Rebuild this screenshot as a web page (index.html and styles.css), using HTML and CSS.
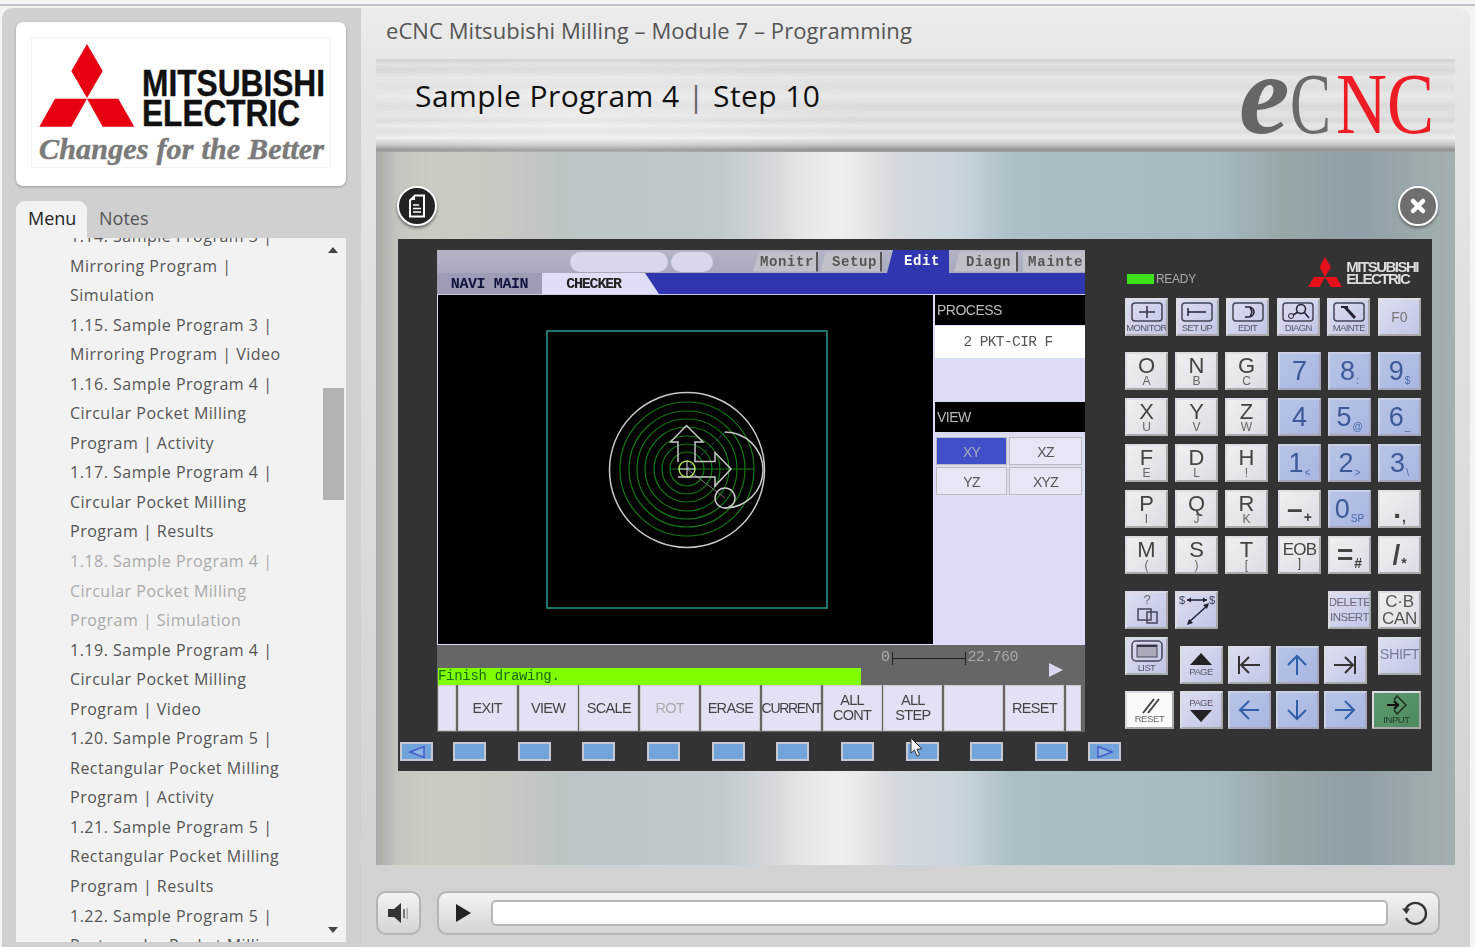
FILE: index.html
```html
<!DOCTYPE html>
<html>
<head>
<meta charset="utf-8">
<title>eCNC Mitsubishi Milling</title>
<link rel="stylesheet" href="styles.css">
</head>
<body>
<div class="topline"></div>
<div class="app">

<div class="sidebar">
	<div class="logocard">
		<svg class="melco" viewBox="31 37 300 131" width="300" height="131">
			<rect x="31.5" y="37.5" width="299" height="130" fill="#fff" stroke="#e6e6e6" stroke-dasharray="1 1"/>
			<path fill="#e60012" d="M87 44l15.700 27L87 98 71.300 71zM55 98.700h32l-15.700 28h-32zM87 98.700h31.300l16 28h-31.600z"/>
			<text x="142" y="96" class="melco-name" textLength="183" lengthAdjust="spacingAndGlyphs">MITSUBISHI</text>
			<text x="142" y="126" class="melco-name" textLength="158" lengthAdjust="spacingAndGlyphs">ELECTRIC</text>
			<text x="39" y="159" class="melco-tag" textLength="285" lengthAdjust="spacing">Changes for the Better</text>
		</svg>
	</div>
	<div class="tabs">
		<div class="tab active">Menu</div>
		<div class="tab">Notes</div>
	</div>
	<div class="menu">
		<ul class="menulist">
			<li>1.14. Sample Program 3 |<br>Mirroring Program |<br>Simulation</li>
			<li>1.15. Sample Program 3 |<br>Mirroring Program | Video</li>
			<li>1.16. Sample Program 4 |<br>Circular Pocket Milling<br>Program | Activity</li>
			<li>1.17. Sample Program 4 |<br>Circular Pocket Milling<br>Program | Results</li>
			<li class="current">1.18. Sample Program 4 |<br>Circular Pocket Milling<br>Program | Simulation</li>
			<li>1.19. Sample Program 4 |<br>Circular Pocket Milling<br>Program | Video</li>
			<li>1.20. Sample Program 5 |<br>Rectangular Pocket Milling<br>Program | Activity</li>
			<li>1.21. Sample Program 5 |<br>Rectangular Pocket Milling<br>Program | Results</li>
			<li>1.22. Sample Program 5 |<br>Rectangular Pocket Milling<br>Program | Simulation</li>
		</ul>
		<div class="arrow-up"></div>
		<div class="thumb"></div>
		<div class="arrow-down"></div>
	</div>
</div>

<div class="main">
	<div class="title">eCNC Mitsubishi Milling – Module 7 – Programming</div>
	<div class="header">
		<div class="slide-title">Sample Program 4 <span class="sep">|</span> Step 10</div>
		<svg class="ecnc" viewBox="0 0 200 66" width="200" height="66">
			<text x="4" y="59" class="ecnc-e">e</text>
			<text x="55" y="59" class="ecnc-c" textLength="41" lengthAdjust="spacingAndGlyphs">C</text>
			<text x="101" y="59" class="ecnc-r" textLength="98" lengthAdjust="spacingAndGlyphs">NC</text>
		</svg>
	</div>

	<div class="stage">
		<div class="roundbtn dark">
			<svg width="18" height="24" viewBox="0 0 18 24"><path fill="none" stroke="#fff" stroke-width="2" d="M7 1.500h9v21H2V6.500z"/><path fill="#fff" d="M2 6l5-5v5z"/><path stroke="#fff" stroke-width="1.500" d="M5 11h6M5 14.500h8M5 18h8"/></svg>
		</div>
		<div class="roundbtn gray">
			<svg width="22" height="22" viewBox="0 0 22 22"><path stroke="#fff" stroke-width="4.500" stroke-linecap="round" d="M6 6l10 10M16 6L6 16"/></svg>
		</div>

		<div class="panel">
			<div class="leftcol">
				<div class="screen">
					<div class="tabbar">
						<div class="pill wide"></div>
						<div class="pill"></div>
						<div class="gtab t1">Monitr</div>
						<div class="gtab t2">Setup</div>
						<div class="gtab t3">Edit</div>
						<div class="gtab t4">Diagn</div>
						<div class="gtab t5">Mainte</div>
					</div>
					<div class="navibar">
						<div class="navi">NAVI MAIN</div>
						<div class="navi on">CHECKER</div>
					</div>
					<div class="work">
						<svg class="canvas" viewBox="438 295 495 349" width="495" height="349">
							<rect x="547" y="331" width="280" height="277" fill="none" stroke="#2a9a8e" stroke-width="1.500"/>
							<g fill="none" stroke="#127a12" stroke-width="1.200">
								<circle cx="687" cy="469" r="67"/>
								<circle cx="687" cy="469" r="58"/>
								<circle cx="687" cy="469" r="50"/>
								<circle cx="687" cy="469" r="42"/>
								<circle cx="687" cy="469" r="33"/>
								<circle cx="687" cy="469" r="25"/>
								<circle cx="687" cy="469" r="17"/>
								<path d="M670 469h84"/>
							</g>
							<path stroke="#2a6f7a" stroke-dasharray="3 2" d="M687 469l38-37"/>
							<path stroke="#777" d="M687 469l38 29"/>
							<g fill="none" stroke="#c8c8c8" stroke-width="1.500">
								<circle cx="687" cy="470" r="77.500"/>
								<path d="M678 462v-20h-7.500l16-16.500 16.500 16.500h-8v19.500h20v-9l16 16.500-16 17v-9h-37"/>
								<path d="M725 432a38 38 0 0 1 0 76"/>
								<circle cx="725" cy="498" r="10"/>
							</g>
							<circle cx="687" cy="469" r="8" fill="none" stroke="#a8e050" stroke-width="1.500"/>
							<path stroke="#ddd" d="M687 461v16M679 469h16"/>
						</svg>
						<div class="side">
							<div class="sidehead">PROCESS</div>
							<div class="sidevalue">2 PKT-CIR F</div>
							<div class="sidefill"></div>
							<div class="sidehead">VIEW</div>
							<div class="viewgrid">
								<div class="viewbtn on">XY</div>
								<div class="viewbtn">XZ</div>
								<div class="viewbtn">YZ</div>
								<div class="viewbtn">XYZ</div>
							</div>
						</div>
					</div>
					<div class="status">
						<div class="message">Finish drawing.</div>
						<div class="scale">0<span class="scalebar"></span>22.760</div>
						<div class="next"></div>
					</div>
					<div class="softkeys">
						<div class="skey narrow"></div>
						<div class="skey">EXIT</div>
						<div class="skey">VIEW</div>
						<div class="skey">SCALE</div>
						<div class="skey off">ROT</div>
						<div class="skey">ERASE</div>
						<div class="skey tight">CURRENT</div>
						<div class="skey">ALL<br>CONT</div>
						<div class="skey">ALL<br>STEP</div>
						<div class="skey"></div>
						<div class="skey">RESET</div>
						<div class="skey narrow"></div>
					</div>
				</div>
				<div class="navrow">
					<div class="navkey"><svg width="18" height="14" viewBox="0 0 18 14"><path fill="#8cb4e2" stroke="#4358c8" stroke-width="1.500" d="M2 7l14-5.500v11z"/></svg></div>
					<div class="navgroup">
						<div class="navkey"></div>
						<div class="navkey"></div>
						<div class="navkey"></div>
						<div class="navkey"></div>
						<div class="navkey"></div>
						<div class="navkey"></div>
						<div class="navkey"></div>
						<div class="navkey"></div>
						<div class="navkey"></div>
						<div class="navkey"></div>
					</div>
					<div class="navkey"><svg width="18" height="14" viewBox="0 0 18 14"><path fill="#8cb4e2" stroke="#4358c8" stroke-width="1.500" d="M16 7L2 1.500v11z"/></svg></div>
				</div>
				<svg class="pointer" width="13" height="20" viewBox="0 0 13 20"><path fill="#fff" stroke="#333" d="M1 1v15l3.500-3 2.500 6 2.500-1-2.500-6h5z"/></svg>
			</div>

			<div class="keypad">
				<div class="readyrow">
					<div class="ready"><span class="lamp"></span>READY</div>
					<div class="minilogo">
						<svg width="34" height="32" viewBox="0 0 34 32"><path fill="#e8101a" d="M17 0l6 10-6 10-5.400-10zM6 20h11l-5.400 10H0zM17 20h11.500L34 30H23z"/></svg>
						<div class="ministack">MITSUBISHI<br>ELECTRIC</div>
					</div>
				</div>

				<div class="fnrow">
					<div class="key fn"><svg width="34" height="22" viewBox="0 0 34 22"><rect x="2" y="2" width="30" height="18" rx="3" fill="none" stroke="#445" stroke-width="1.500"/><path stroke="#334" stroke-width="1.500" d="M9 11h16M17 5v12"/></svg><small>MONITOR</small></div>
					<div class="key fn"><svg width="34" height="22" viewBox="0 0 34 22"><rect x="2" y="2" width="30" height="18" rx="3" fill="none" stroke="#445" stroke-width="1.500"/><path stroke="#223" stroke-width="1.500" d="M8 11h18M8 7v8"/></svg><small>SET UP</small></div>
					<div class="key fn"><svg width="34" height="22" viewBox="0 0 34 22"><rect x="2" y="2" width="30" height="18" rx="3" fill="none" stroke="#445" stroke-width="1.500"/><path fill="none" stroke="#223" stroke-width="1.500" d="M14 6h5l2 5-2 5h-5M18 6a5 5 0 0 1 0 10"/></svg><small>EDIT</small></div>
					<div class="key fn"><svg width="34" height="22" viewBox="0 0 34 22"><rect x="2" y="2" width="30" height="18" rx="3" fill="none" stroke="#445" stroke-width="1.500"/><circle cx="20" cy="8" r="4.500" fill="none" stroke="#223" stroke-width="1.500"/><circle cx="10" cy="15" r="2.500" fill="none" stroke="#223"/><path stroke="#223" stroke-width="1.500" d="M23 11l5 6M12 14l5-3"/></svg><small>DIAGN</small></div>
					<div class="key fn"><svg width="34" height="22" viewBox="0 0 34 22"><rect x="2" y="2" width="30" height="18" rx="3" fill="none" stroke="#445" stroke-width="1.500"/><path stroke="#223" stroke-width="3" d="M13 6l10 11"/><path fill="none" stroke="#223" stroke-width="2" d="M9 6h6v4"/></svg><small>MAINTE</small></div>
					<div class="key fn"><span class="f0">F0</span></div>
				</div>

				<div class="keyblock">
					<div class="keygrid">
						<div class="key lite"><b>O</b><small>A</small></div>
						<div class="key lite"><b>N</b><small>B</small></div>
						<div class="key lite"><b>G</b><small>C</small></div>
						<div class="key lite"><b>X</b><small>U</small></div>
						<div class="key lite"><b>Y</b><small>V</small></div>
						<div class="key lite"><b>Z</b><small>W</small></div>
						<div class="key lite"><b>F</b><small>E</small></div>
						<div class="key lite"><b>D</b><small>L</small></div>
						<div class="key lite"><b>H</b><small>!</small></div>
						<div class="key lite"><b>P</b><small>I</small></div>
						<div class="key lite"><b>Q</b><small>J</small></div>
						<div class="key lite"><b>R</b><small>K</small></div>
						<div class="key lite"><b>M</b><small>(</small></div>
						<div class="key lite"><b>S</b><small>)</small></div>
						<div class="key lite"><b>T</b><small>[</small></div>
					</div>
					<div class="keygrid">
						<div class="key num"><b>7</b></div>
						<div class="key num"><b>8</b><small>:</small></div>
						<div class="key num"><b>9</b><small>$</small></div>
						<div class="key num"><b>4</b></div>
						<div class="key num"><b>5</b><small>@</small></div>
						<div class="key num"><b>6</b><small>_</small></div>
						<div class="key num"><b>1</b><small>&lt;</small></div>
						<div class="key num"><b>2</b><small>&gt;</small></div>
						<div class="key num"><b>3</b><small>\</small></div>
						<div class="key sym"><b>–</b><small>+</small></div>
						<div class="key num"><b>0</b><small>SP</small></div>
						<div class="key sym"><b>.</b><small>,</small></div>
						<div class="key sym eob"><b>EOB</b><small>]</small></div>
						<div class="key sym"><b>=</b><small>#</small></div>
						<div class="key sym"><b>/</b><small>*</small></div>
					</div>
				</div>

				<div class="rowa">
					<div class="key fn"><svg width="34" height="34" viewBox="0 0 34 34"><text x="17" y="11" class="keyq">?</text><rect x="8" y="16" width="13" height="11" fill="none" stroke="#445" stroke-width="1.500"/><rect x="17" y="19" width="10" height="11" fill="none" stroke="#445" stroke-width="1.500"/></svg></div>
					<div class="key fn"><svg width="38" height="34" viewBox="0 0 38 34"><text x="1" y="11" class="keyd">$</text><text x="31" y="11" class="keyd">$</text><path stroke="#223" stroke-width="1.500" d="M9 7h20M10 30l20-18"/><path fill="#223" d="M9 7l4-2.500v5zM29 7l-4-2.500v5zM9 32l2-6 4 4zM31 10l-6 2 4 4z"/></svg></div>
					<div class="spacer"></div>
					<div class="key fn word">DELETE<br>INSERT</div>
					<div class="key lite word big">C·B<br>CAN</div>
				</div>

				<div class="lower">
					<div class="lowcol">
						<div class="key fn"><svg width="34" height="24" viewBox="0 0 34 24"><rect x="2" y="2" width="30" height="20" rx="4" fill="none" stroke="#445" stroke-width="1.500"/><rect x="7" y="6" width="20" height="12" fill="#aab" stroke="#445"/><path stroke="#334" stroke-width="2" d="M7 7h20"/></svg><small>LIST</small></div>
						<div class="key reset"><svg width="24" height="18" viewBox="0 0 24 18"><path stroke="#444" stroke-width="2" d="M5 17L16 3M10 17L21 3"/></svg><small>RESET</small></div>
					</div>
					<div class="arrows">
						<div class="key fn"><span class="up-tri"></span><small>PAGE</small></div>
						<div class="key fn"><svg width="26" height="22" viewBox="0 0 26 22"><path fill="none" stroke="#333" stroke-width="2" d="M3 2v18M24 11H5M13 3l-8 8 8 8"/></svg></div>
						<div class="key num"><svg width="24" height="24" viewBox="0 0 24 24"><path fill="none" stroke="#2f5fa8" stroke-width="2" d="M12 22V3M3 12l9-9 9 9"/></svg></div>
						<div class="key fn"><svg width="26" height="22" viewBox="0 0 26 22"><path fill="none" stroke="#333" stroke-width="2" d="M23 2v18M2 11h19M13 3l8 8-8 8"/></svg></div>
						<div class="key fn"><small>PAGE</small><span class="down-tri"></span></div>
						<div class="key num"><svg width="24" height="24" viewBox="0 0 24 24"><path fill="none" stroke="#2f5fa8" stroke-width="2" d="M22 12H3M12 3l-9 9 9 9"/></svg></div>
						<div class="key num"><svg width="24" height="24" viewBox="0 0 24 24"><path fill="none" stroke="#2f5fa8" stroke-width="2" d="M12 2v19M3 12l9 9 9-9"/></svg></div>
						<div class="key num"><svg width="24" height="24" viewBox="0 0 24 24"><path fill="none" stroke="#2f5fa8" stroke-width="2" d="M2 12h19M12 3l9 9-9 9"/></svg></div>
					</div>
					<div class="lowcol right">
						<div class="key fn word shift">SHIFT</div>
						<div class="key input"><svg width="24" height="20" viewBox="0 0 24 20"><path fill="none" stroke="#1d2f22" stroke-width="1.500" d="M9 5l3-4 9 9-9 9-3-4"/><path fill="none" stroke="#111" stroke-width="2.200" d="M2 10h10M9 6l4 4-4 4"/></svg><small>INPUT</small></div>
					</div>
				</div>
			</div>
		</div>
	</div>

	<div class="controls">
		<div class="volume">
			<svg width="24" height="24" viewBox="0 0 24 24"><path fill="#333" d="M1 8h6l7-6v20l-7-6H1z"/><path fill="#777" d="M16 8h2v9h-2z"/><path fill="#aaa" d="M19.500 7h1.500v11h-1.500z"/></svg>
		</div>
		<div class="playbar">
			<div class="play"></div>
			<div class="progress"></div>
			<svg class="replay" width="28" height="28" viewBox="0 0 28 28"><path fill="none" stroke="#333" stroke-width="2.400" d="M5.500 11A10.500 10.500 0 1 1 6 19"/><path fill="#333" d="M2 9.500h8l-3.500 5.500z"/></svg>
		</div>
	</div>
</div>

</div>
</body>
</html>
```

FILE: styles.css
```css
html, body {margin:0; padding:0; height:947px; overflow:hidden; background:#f4f4f4; font-family:"Open Sans", sans-serif;}
.topline {height:4px; background:#f6f6f6; border-bottom:2px solid #c4c4c8;}
.app {display:flex; height:941px; padding:2px 5px 0 2px;}

/* left column */
.sidebar {width:359px; flex:none; background:#d0d0d0; border-radius:10px 0 0 0; padding:14px 15px 0 14px; box-sizing:border-box;}
.logocard {background:#fff; height:164px; padding:15px; box-sizing:border-box; border-radius:7px; box-shadow:0 1px 3px #999;}
.melco {display:block;}
.melco-name {font:bold 37px "Liberation Sans", sans-serif; fill:#111; stroke:#111; stroke-width:.4;}
.melco-tag {font:italic bold 30px "Liberation Serif", serif; fill:#7a7a7a; stroke:#7a7a7a; stroke-width:.5;}
.tabs {display:flex; margin-top:15px; height:37px;}
.tab {font-size:18px; color:#555; padding:4px 12px 0; line-height:26px;}
.tab.active {background:#f2f2f2; color:#222; border-radius:9px 9px 0 0; width:47px;}
.menu {position:relative; height:704px; background:#f2f2f2; overflow:hidden;}
.menulist {list-style:none; margin:-16px 0 0; padding:0 0 0 54px; font-size:16px; line-height:29.550px; color:#555; letter-spacing:.5px; white-space:nowrap;}
.menulist .current {color:#aaa;}
.arrow-up, .arrow-down {position:absolute; left:312px; width:0; height:0; border-left:5.500px solid transparent; border-right:5.500px solid transparent;}
.arrow-up {top:9px; border-bottom:6px solid #444;}
.arrow-down {top:689px; border-top:6px solid #444;}
.thumb {position:absolute; left:307px; top:150px; width:21px; height:112px; background:#b3b3b3;}

/* right column */
.main {width:1109px; flex:none; background:linear-gradient(#ececec, #e6e6e6 60px, #d2d2d2 880px); border-radius:0 10px 0 0; padding:0 15px; box-sizing:border-box;}
.title {height:51px; line-height:44px; padding-left:10px; font-size:22px; color:#555; letter-spacing:.07px; white-space:nowrap;}
.header {height:93px; display:flex; justify-content:space-between; background:radial-gradient(ellipse 300px 60px at 200px 55px, rgba(255,255,255,.4), transparent), linear-gradient(#d4d4d4, #e2e2e2 6%, #d8d8d8 12%, #e6e6e6 20%, #dedede 30%, #e8e8e8 40%, #dadada 50%, #e2e2e2 60%, #d8d8d8 66%, #e8e8e8 72%, #dcdcdc 78%, #eee 85%, #c0c0c0 93%, #8f8f8f 98%, #a4a4a4);}
.slide-title {font-size:30px; color:#111; letter-spacing:.43px; padding:16px 0 0 39px; white-space:nowrap;}
.sep {color:#666;}
.ecnc {margin:15px 20px 0 0; overflow:visible;}
.ecnc-e {font:italic bold 114px "Liberation Serif", serif; fill:#666;}
.ecnc-c {font:86px "Liberation Serif", serif; fill:#6a6a6a;}
.ecnc-r {font:86px "Liberation Serif", serif; fill:#ee1c25;}

.stage {position:relative; height:713px; box-sizing:border-box; padding:87px 0 0 22px; background:linear-gradient(90deg, #a8a8a6, #c6c6c0 2%, #cccac2 5%, #c8c8c2 12%, #bcc4c6 17%, #bcc6c8 22%, #c0cacc 32%, #d2d6da 36%, #e6e8e8 40%, #efefef 43%, #e8e8e8 45%, #d4d9de 48%, #c8d6dc 54%, #aebec7 59%, #a7b8c0 78%, #98a7a8 84%, #8f9fa5 91%, #a4b0b0);}
.roundbtn {position:absolute; top:34px; width:36px; height:36px; border-radius:50%; border:2px solid #fff; box-shadow:0 2px 3px #666; display:flex; align-items:center; justify-content:center;}
.roundbtn.dark {left:21px; background:#222;}
.roundbtn.gray {left:1022px; background:#6f6f6f;}

.panel {display:flex; width:1034px; height:532px; box-sizing:border-box; background:#333; padding:11px 11px 0 2px; gap:4px; filter:blur(.45px);}
.leftcol {width:721px; position:relative;}
.screen {margin-left:37px; width:648px; height:482px; display:flex; flex-direction:column; font-family:"Liberation Mono", monospace;}

.tabbar {height:23px; display:flex; align-items:center; background:linear-gradient(#b5b5c8, #a8a8be); flex:none;}
.pill {width:42px; height:20px; border-radius:10px; background:#d8d8ea; margin-left:3px;}
.pill.wide {width:98px; margin-left:133px;}
.gtab {height:20px; box-sizing:border-box; font-size:14px; line-height:20px; color:#555; background:#c0c0c8; letter-spacing:.6px; clip-path:polygon(6px 0, 100% 0, 100% 100%, 0 100%); font-weight:bold; white-space:nowrap; overflow:hidden; border-right:2px solid #555;}
.t1 {width:65px; margin-left:40px; padding-left:7px;}
.t2 {width:62px; margin-left:2px; padding-left:12px;}
.t3 {width:62px; margin-left:5px; padding-left:17px; height:23px; line-height:23px; background:#3035b0; color:#fff; border:0;}
.t4 {width:64px; margin-left:5px; padding-left:12px;}
.t5 {width:62px; margin-left:5px; padding-left:5px; clip-path:none; letter-spacing:.8px; border:0;}
.navibar {height:21px; display:flex; background:#3035b0; flex:none; font-size:15px; font-weight:bold;}
.navi {width:105px; background:#9c9cb4; color:#111340; text-align:center; line-height:23px; letter-spacing:-.4px;}
.navi.on {width:117px; background:#dedef6; color:#222; clip-path:polygon(0 0, 88% 0, 100% 100%, 0 100%); letter-spacing:-1.200px; padding-right:14px; box-sizing:border-box;}
.work {height:351px; display:flex; background:#dcdcf6; flex:none; border-top:1px solid #c8c8e8; box-sizing:border-box;}
.canvas {background:#000; margin-left:1px; flex:none; display:block;}
.side {margin-left:2px; width:150px; font-family:"Liberation Sans", sans-serif; color:#444;}
.sidehead {height:30px; background:#000; color:#bbb; font-size:14px; line-height:30px; padding-left:2px; letter-spacing:-.5px;}
.sidevalue {height:32px; background:#fff; text-align:center; font:14.500px/32px "Liberation Mono", monospace; color:#555; margin-top:1px; letter-spacing:-.6px; padding-right:4px;}
.sidefill {height:44px;}
.viewgrid {display:grid; grid-template-columns:71px 73px; gap:2px; margin:5px 0 0 1px;}
.viewbtn {height:28px; line-height:28px; text-align:center; font-size:14px; color:#555; background:#e6e6f6; border:1px solid #bbb; box-sizing:border-box; letter-spacing:-.8px;}
.viewbtn.on {background:#4050c8; color:#aab;}

.status {height:40px; background:#666; display:flex; align-items:flex-end; position:relative; flex:none;}
.message {width:423px; margin-left:1px; height:17px; background:#80ff00; color:#1a6a10; font-size:14px; line-height:17px; letter-spacing:-.3px;}
.scale {position:absolute; left:444px; top:4px; color:#aaa; font-size:15px; line-height:18px; display:flex; align-items:center; letter-spacing:-.6px;}
.scalebar {width:72px; height:13px; margin:0 1px 0 3px; border-left:1px solid #222; border-right:1px solid #222; background:linear-gradient(#222,#222) center/100% 1px no-repeat;}
.next {position:absolute; left:612px; top:18px; width:0; height:0; border-left:14px solid #d8d8f0; border-top:7px solid transparent; border-bottom:7px solid transparent;}
.softkeys {height:47px; background:#666; padding-left:1px; display:flex; gap:1.800px; flex:none;}
.skey {width:59px; height:46px; background:#e2e2f4; border:1px solid #ccc; box-sizing:border-box; font:14.500px/15px "Liberation Sans", sans-serif; color:#444; letter-spacing:-.7px; display:flex; align-items:center; justify-content:center; text-align:center;}
.skey.narrow {width:18px;}
.skey:last-child {width:15px;}
.skey.off {color:#aaa;}
.skey.tight {font-size:14px; letter-spacing:-1.300px;}

.navrow {display:flex; justify-content:space-between; margin-top:10px; width:721px;}
.navgroup {width:615px; display:flex; justify-content:space-between;}
.navkey {width:33px; height:19px; background:#70a4da; border:2px solid #c8c8d2; box-sizing:border-box; display:flex; align-items:center; justify-content:center; flex:none;}
.pointer {position:absolute; left:510px; top:487px;}

/* keypad */
.keypad {width:296px; flex:none; font-family:"Liberation Sans", sans-serif;}
.readyrow {height:48px; display:flex; justify-content:space-between; align-items:center; padding:0 3px 0 2px; box-sizing:border-box;}
.ready {display:flex; align-items:center; font-size:12px; color:#aaa; letter-spacing:-.3px; margin-top:9px;}
.lamp {width:27px; height:10px; background:#3ee01a; margin-right:2px;}
.minilogo {display:flex; align-items:center; gap:4px; margin-top:-3px;}
.ministack {font-size:15px; line-height:12px; font-weight:bold; color:#ddd; letter-spacing:-1.500px;}
.key {width:43px; height:38px; box-sizing:border-box; border:2px solid #dcdce2; border-right-color:#aaa; border-bottom-color:#aaa; display:flex; flex-direction:column; align-items:center; justify-content:center; color:#444; text-align:center; overflow:hidden;}
.key b {font-weight:normal; font-size:22px; line-height:20px;}
.key small {font-size:12px; line-height:11px; color:#666;}
.fn {background:linear-gradient(135deg, #dcdef0, #c2c6e6);}
.fn small {font-size:9.500px; letter-spacing:-.6px; line-height:10px; color:#556; white-space:nowrap;}
.f0 {font-size:14px; color:#777;}
.lite {background:linear-gradient(135deg, #f0f0f2, #dcdce4);}
.num {background:linear-gradient(135deg, #b8c4e6, #a8b6e2); flex-direction:row; color:#3c5a98; border-color:#c8cfe6 #a6a6b8 #a6a6b8 #c8cfe6;}
.num b {font-size:27px; line-height:26px;}
.num small {align-self:flex-end; font-size:10px; color:#4a68a8; margin-bottom:2px; margin-left:1px;}
.sym {background:linear-gradient(135deg, #f0f0f2, #dcdce6); flex-direction:row;}
.sym small {align-self:flex-end; margin-bottom:3px; margin-left:1px; font-size:14px; font-weight:bold; color:#444;}
.sym b {font-size:28px; font-weight:bold;}
.eob {flex-direction:column;}
.eob b {font-size:17px; font-weight:normal; letter-spacing:-.8px; line-height:16px;}
.eob small {align-self:center; margin:0; line-height:11px; font-weight:normal; font-size:12px;}
.fnrow {display:flex; justify-content:space-between;}
.keyblock {display:flex; justify-content:space-between; margin-top:16px;}
.keygrid {display:grid; grid-template-columns:repeat(3, 43px); column-gap:7px; row-gap:8px;}
.rowa {display:flex; gap:7px; margin-top:17px;}
.spacer {flex:1;}
.word {font-size:11.500px; line-height:15px; letter-spacing:-.5px; color:#667;}
.word.big {font-size:17px; line-height:17px; letter-spacing:-.3px; color:#555;}
.keyq {font:13px "Liberation Sans", sans-serif; fill:#667; text-anchor:middle;}
.keyd {font:11px "Liberation Sans", sans-serif; fill:#445;}
.lower {display:flex; justify-content:space-between; margin-top:8px;}
.lowcol {width:49px; display:flex; flex-direction:column; gap:16px;}
.lowcol.right {align-items:flex-end;}
.reset, .input {width:49px;}
.reset {background:#fafafa;}
.input {background:linear-gradient(135deg, #5e9a70, #4e8a60);}
.input small {font-size:9.500px; letter-spacing:-.4px; color:#1d3a26; line-height:10px;}
.reset small {font-size:9.500px; letter-spacing:-.4px; line-height:10px;}
.word.shift {font-size:14.500px; color:#7a7e9c; justify-content:flex-start; padding-top:8px;}
.arrows {display:grid; grid-template-columns:repeat(4, 43px); column-gap:5px; row-gap:7px; margin-top:9px; width:187px;}
.up-tri, .down-tri {width:0; height:0; border-left:11px solid transparent; border-right:11px solid transparent;}
.up-tri {border-bottom:12px solid #222; margin-bottom:2px;}
.down-tri {border-top:12px solid #222; margin-top:2px;}

/* player */
.controls {display:flex; gap:16px; margin-top:26px;}
.volume, .playbar {height:44px; box-sizing:border-box; border:2px solid #b4b4b4; border-radius:10px; background:linear-gradient(#f4f4f4, #d4d4d4); display:flex; align-items:center;}
.volume {width:45px; justify-content:center;}
.playbar {width:1003px;}
.play {width:0; height:0; margin-left:17px; border-left:15px solid #222; border-top:9px solid transparent; border-bottom:9px solid transparent;}
.progress {width:897px; height:26px; margin-left:20px; box-sizing:border-box; background:#fff; border:2px solid #b8b8b8; border-radius:5px;}
.replay {margin-left:12px;}
```
